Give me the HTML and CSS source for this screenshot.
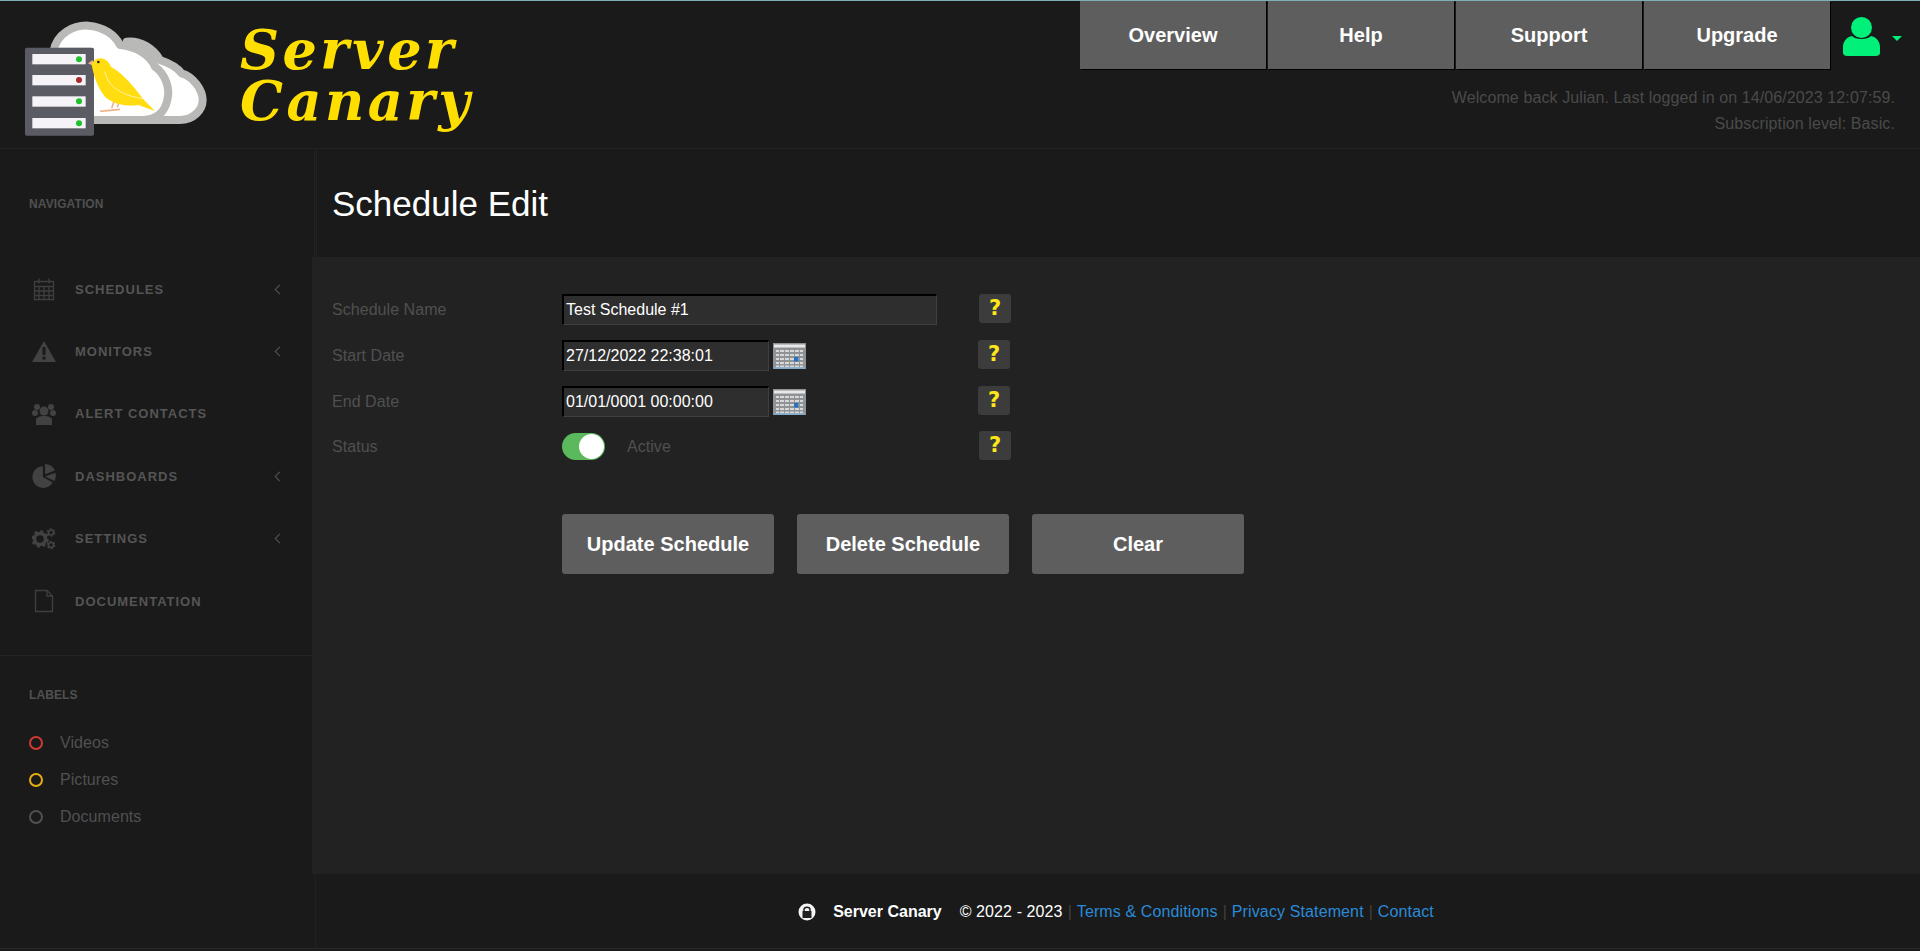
FILE: index.html
```html
<!DOCTYPE html>
<html lang="en">
<head>
<meta charset="utf-8">
<title>Server Canary - Schedule Edit</title>
<link rel="stylesheet" href="styles.css">
</head>
<body>
<div class="page">
  <header class="topbar">
    <a class="brand" href="#">
      <svg class="brand-mark" viewBox="0 0 630 390" aria-hidden="true">
        <path class="cloud" d="M350 95C390 90 430 115 450 150C480 160 500 170 515 190C550 200 578 240 578 270C578 300 550 330 510 330L400 330L350 200Z"/>
        <path class="cloud" d="M130 125C140 70 190 45 235 47C280 50 315 75 330 105C380 110 420 135 435 170C470 195 480 240 472 270C465 305 440 330 400 330L240 330L240 125Z"/>
        <rect class="rack" x="45" y="113" width="207" height="264" rx="5"/>
        <rect class="slot" x="67" y="132" width="160" height="31"/>
        <rect class="slot" x="67" y="195" width="160" height="31"/>
        <rect class="slot" x="67" y="259" width="160" height="31"/>
        <rect class="slot" x="67" y="324" width="160" height="31"/>
        <circle class="led-ok" cx="207" cy="148" r="9"/>
        <circle class="led-bad" cx="207" cy="210" r="9"/>
        <circle class="led-ok" cx="207" cy="274" r="9"/>
        <circle class="led-ok" cx="207" cy="340" r="9"/>
        <path class="bird-leg" d="M315 265L305 295M330 265L322 292M270 304L330 298"/>
        <path class="bird-beak" d="M248 150L234 160L250 168Z"/>
        <path class="bird" d="M245 165C248 145 285 130 303 170C340 190 380 240 400 268L435 303L385 285C360 290 310 285 285 260C260 230 250 190 245 165Z"/>
        <path class="bird-wing" d="M285 185C295 240 350 258 400 266"/>
        <circle class="bird-eye" cx="265" cy="156" r="4"/>
      </svg>
      <span class="wordmark"><span class="word-line">Server</span><span class="word-line">Canary</span></span>
    </a>
    <div class="top-right">
      <div class="top-row">
        <nav class="top-nav">
          <a class="top-link" href="#">Overview</a>
          <a class="top-link" href="#">Help</a>
          <a class="top-link" href="#">Support</a>
          <a class="top-link" href="#">Upgrade</a>
        </nav>
        <a class="user" href="#">
          <svg class="user-icon" viewBox="0 0 37 39" aria-hidden="true">
            <circle class="user-fill" cx="18.5" cy="10.5" r="10.5"/>
            <path class="user-fill" d="M9 19C12 23 25 23 28 19C33 20 37 24 37 30L37 36C37 38 35 39 33 39L4 39C2 39 0 38 0 36L0 30C0 24 4 20 9 19Z"/>
          </svg>
          <span class="user-caret"></span>
        </a>
      </div>
      <p class="welcome">Welcome back Julian. Last logged in on 14/06/2023 12:07:59.<br>Subscription level: Basic.</p>
    </div>
  </header>

  <div class="body">
    <aside class="sidebar">
      <h2 class="side-title side-title-nav">NAVIGATION</h2>
      <ul class="side-nav">
        <li class="side-item">
          <svg class="side-icon" viewBox="0 0 22 24" aria-hidden="true"><path class="i-line" d="M1.5 4.5h19v18h-19zM1.5 9.5h19M1.5 14h19M1.5 18.500h19M6 9.500v13M11 9.500v13M16 9.500v13"/><path class="i-line" d="M6 1.500v5M16 1.500v5"/></svg>
          <span class="side-text">SCHEDULES</span><span class="chev"></span>
        </li>
        <li class="side-item">
          <svg class="side-icon" viewBox="0 0 24 22" aria-hidden="true"><path class="i-fill" d="M12 0L24 21H0Z"/><rect class="i-cut" x="10.500" y="6" width="3" height="8"/><rect class="i-cut" x="10.500" y="15.500" width="3" height="3"/></svg>
          <span class="side-text">MONITORS</span><span class="chev"></span>
        </li>
        <li class="side-item">
          <svg class="side-icon" viewBox="0 0 24 22" aria-hidden="true"><circle class="i-fill" cx="5" cy="4" r="3"/><circle class="i-fill" cx="19" cy="4" r="3"/><circle class="i-fill" cx="3" cy="10" r="3"/><circle class="i-fill" cx="21" cy="10" r="3"/><circle class="i-fill" cx="12" cy="8" r="4.500"/><path class="i-fill" d="M4 22V17C4 14 8 13 12 13C16 13 20 14 20 17V22Z"/></svg>
          <span class="side-text">ALERT CONTACTS</span>
        </li>
        <li class="side-item">
          <svg class="side-icon" viewBox="0 0 22 22" aria-hidden="true"><path class="i-fill" d="M10 2A10 10 0 1 0 19 17L10 12Z"/><path class="i-fill" d="M12 0A10 10 0 0 1 21 6L12 9.500Z"/><path class="i-fill" d="M12 11.500L21.500 8A10 10 0 0 1 20.500 15.500Z"/></svg>
          <span class="side-text">DASHBOARDS</span><span class="chev"></span>
        </li>
        <li class="side-item">
          <svg class="side-icon" viewBox="0 0 24 22" aria-hidden="true"><circle class="i-gear-big" cx="8" cy="11" r="5.500"/><circle class="i-gear-tooth-big" cx="8" cy="11" r="7.500"/><circle class="i-gear-small" cx="19" cy="4.500" r="2.500"/><circle class="i-gear-tooth" cx="19" cy="4.500" r="3.500"/><circle class="i-gear-small" cx="19" cy="17" r="2.500"/><circle class="i-gear-tooth" cx="19" cy="17" r="3.500"/></svg>
          <span class="side-text">SETTINGS</span><span class="chev"></span>
        </li>
        <li class="side-item">
          <svg class="side-icon" viewBox="0 0 22 24" aria-hidden="true"><path class="i-line" d="M2.500 1.500H14L19.500 7V22.500H2.500ZM14 1.500V7H19.500"/></svg>
          <span class="side-text">DOCUMENTATION</span>
        </li>
      </ul>
      <div class="side-rule"></div>
      <h2 class="side-title side-title-labels">LABELS</h2>
      <ul class="labels">
        <li class="label-item"><span class="dot dot-red"></span>Videos</li>
        <li class="label-item"><span class="dot dot-amber"></span>Pictures</li>
        <li class="label-item"><span class="dot dot-grey"></span>Documents</li>
      </ul>
    </aside>

    <main class="main">
      <div class="title-band"><h1 class="title">Schedule Edit</h1></div>
      <section class="content">
        <form class="form">
          <label class="f-label">Schedule Name</label>
          <div class="f-field"><input class="input input-wide" type="text" value="Test Schedule #1"></div>
          <button class="help" type="button">?</button>

          <label class="f-label">Start Date</label>
          <div class="f-field"><input class="input input-date" type="text" value="27/12/2022 22:38:01">
            <svg class="cal" viewBox="0 0 33 26" aria-hidden="true"><rect class="cal-body" width="33" height="26"/><rect class="cal-head" x="1" y="1.500" width="31" height="3"/><path class="cal-grid" d="M3 8h27M3 12h27M3 16h27M3 20h27M3 23.500h27"/><path class="cal-bars" d="M6.500 6v18M11.500 6v18M16.500 6v18M21.500 6v18M26.500 6v18"/><rect class="cal-day" x="21" y="14" width="4.500" height="4.500"/><path class="cal-base" d="M1 25h31"/></svg>
          </div>
          <button class="help help-shift" type="button">?</button>

          <label class="f-label">End Date</label>
          <div class="f-field"><input class="input input-date" type="text" value="01/01/0001 00:00:00">
            <svg class="cal" viewBox="0 0 33 26" aria-hidden="true"><rect class="cal-body" width="33" height="26"/><rect class="cal-head" x="1" y="1.500" width="31" height="3"/><path class="cal-grid" d="M3 8h27M3 12h27M3 16h27M3 20h27M3 23.500h27"/><path class="cal-bars" d="M6.500 6v18M11.500 6v18M16.500 6v18M21.500 6v18M26.500 6v18"/><rect class="cal-day" x="21" y="14" width="4.500" height="4.500"/><path class="cal-base" d="M1 25h31"/></svg>
          </div>
          <button class="help help-shift" type="button">?</button>

          <label class="f-label f-label-last">Status</label>
          <div class="f-field f-field-last"><span class="toggle"><span class="knob"></span></span><span class="toggle-text">Active</span></div>
          <button class="help help-last" type="button">?</button>
        </form>
        <div class="actions">
          <button class="action" type="button">Update Schedule</button>
          <button class="action" type="button">Delete Schedule</button>
          <button class="action" type="button">Clear</button>
        </div>
      </section>
      <footer class="footer">
        <svg class="lock" viewBox="0 0 18 18" aria-hidden="true"><circle class="lock-bg" cx="9" cy="9" r="8.500"/><path class="lock-shackle" d="M6 8.500V6.500C6 3.500 12 3.500 12 6.500V8.500"/><rect class="lock-body" x="4.500" y="8" width="9" height="7"/></svg>
        <strong class="foot-name">Server Canary</strong>
        <span class="foot-copy">© 2022 - 2023</span>
        <span class="foot-sep">|</span><a class="foot-link" href="#">Terms &amp; Conditions</a>
        <span class="foot-sep">|</span><a class="foot-link" href="#">Privacy Statement</a>
        <span class="foot-sep">|</span><a class="foot-link" href="#">Contact</a>
      </footer>
    </main>
  </div>
</div>
</body>
</html>
```
FILE: styles.css
```css
* { box-sizing: border-box; }
html, body { margin: 0; height: 100%; }
body {
  background: #1a1a1a;
  color: #505050;
  font-family: "Liberation Sans", Arial, sans-serif;
  font-size: 16px;
  overflow: hidden;
}
a { text-decoration: none; color: inherit; }
ul { list-style: none; margin: 0; padding: 0; }
.page { height: 951px; display: flex; flex-direction: column; padding-bottom: 2px; }

/* header */
.topbar {
  height: 150px;
  flex: none;
  display: flex;
  justify-content: space-between;
  background: #1a1a1a;
  border-top: 1px solid #7fb0b5;
  border-bottom: 1px solid #1a1a1a;
  box-shadow: inset 0 -1px 0 #222;
}
.brand { display: flex; align-items: flex-start; padding-left: 10px; padding-top: 9px; }
.brand-mark { width: 210px; height: 130px; display: block; }
.cloud { fill: #fff; stroke: #b9b9b7; stroke-width: 24; stroke-linejoin: round; }
.rack { fill: #5b5b63; }
.slot { fill: #f5f3f8; }
.led-ok { fill: #1cc22c; }
.led-bad { fill: #a52c28; }
.bird { fill: #ffdd10; }
.bird-wing { fill: none; stroke: #fff2a0; stroke-width: 3; }
.bird-eye { fill: #223; }
.bird-beak { fill: #eeb48c; }
.bird-leg { fill: none; stroke: #eeb48c; stroke-width: 5; }
.wordmark {
  margin-left: 20px;
  margin-top: 15px;
  font-family: "DejaVu Serif", serif;
  font-style: italic;
  font-weight: 700;
  font-size: 54px;
  line-height: 51px;
  letter-spacing: 3.5px;
  color: #ffdf00;
}
.word-line { display: block; }
.top-right { display: flex; flex-direction: column; align-items: flex-end; }
.top-row { display: flex; align-items: flex-start; }
.top-nav { display: flex; gap: 2px; }
.top-link {
  width: 186px;
  height: 68px;
  display: flex;
  align-items: center;
  justify-content: center;
  background: #5e5e5e;
  color: #fff;
  font-weight: 700;
  font-size: 20px;
  box-shadow: 1px 1px 0 #000;
}
.user { width: 90px; display: flex; align-items: flex-start; padding: 16px 0 0 13px; }
.user-icon { width: 37px; height: 39px; display: block; }
.user-fill { fill: #00f07a; }
.user-caret {
  margin: 19px 0 0 12px;
  border-top: 5px solid #00f07a;
  border-left: 5px solid transparent;
  border-right: 5px solid transparent;
}
.welcome {
  margin: 16px 25px 0 0;
  text-align: right;
  line-height: 26px;
  letter-spacing: 0.1px;
  color: #4a4a4a;
}

/* body */
.body { flex: 1; display: grid; grid-template-columns: 312px 1fr; min-height: 0; border-bottom: 1px solid #2a2a2a; }

/* sidebar */
.sidebar { background: #1a1a1a; display: flex; flex-direction: column; }
.side-title { margin: 0; padding-left: 29px; font-size: 12px; line-height: 16px; font-weight: 700; letter-spacing: 0.1px; color: #505050; }
.side-title-nav { padding-top: 46px; height: 108px; }
.side-nav { flex: none; }
.side-item { height: 62.4px; display: flex; align-items: center; position: relative; padding-left: 32px; }
.side-icon { width: 24px; height: 24px; flex: none; }
.side-text {
  margin-left: 19px;
  font-size: 13px;
  font-weight: 700;
  letter-spacing: 1px;
  color: #555;
}
.chev {
  width: 7px;
  height: 7px;
  margin-left: auto;
  margin-right: 29px;
  border-left: 1px solid #555;
  border-bottom: 1px solid #555;
  transform: rotate(45deg);
}
.i-line { fill: none; stroke: #3f3f3f; stroke-width: 1.3; }
.i-fill { fill: #424242; }
.i-cut { fill: #1a1a1a; }
.i-gear-big { fill: none; stroke: #424242; stroke-width: 3.5; }
.i-gear-tooth-big { fill: none; stroke: #424242; stroke-width: 2.5; stroke-dasharray: 3 2.9; }
.i-gear-small { fill: none; stroke: #424242; stroke-width: 1.6; }
.i-gear-tooth { fill: none; stroke: #424242; stroke-width: 1.6; stroke-dasharray: 2 1.67; }
.side-rule { margin-top: 23px; border-top: 1px solid #232323; }
.side-title-labels { padding-top: 31px; }
.labels { margin-top: 21px; }
.label-item { height: 37px; display: flex; align-items: center; padding-left: 29px; letter-spacing: 0.05px; color: #505050; }
.dot { width: 14px; height: 14px; border-radius: 50%; border: 2px solid; margin-right: 17px; }
.dot-red { border-color: #cf3a34; }
.dot-amber { border-color: #e6ad12; }
.dot-grey { border-color: #505050; }

/* main */
.main { background: #1a1a1a; display: flex; flex-direction: column; min-width: 0; }
.title-band {
  height: 107px;
  flex: none;
  padding: 0 0 0 20px;
  display: flex;
  align-items: center;
  background: #1a1a1a linear-gradient(90deg, #1a1a1a 2px, #212121 2px, #212121 3px, #1a1a1a 3px, #1a1a1a 4px, #212121 4px, #212121 5px, #1a1a1a 5px);
}
.title { margin: 0; font-weight: 400; font-size: 35px; color: #fff; }
.content { flex: 1; padding: 37px 0 0 20px; background: #222; }
.form { display: grid; grid-template-columns: 230px 417px 32px; row-gap: 15px; align-items: start; }
.f-label { line-height: 31px; letter-spacing: 0.05px; color: #505050; }
.f-field { display: flex; align-items: center; height: 31px; }
.f-label-last, .f-field-last, .help-last { margin-top: -1px; }
.input {
  height: 31px;
  padding: 0 2px;
  background: #2e2e2e;
  color: #fff;
  font: 16px "Liberation Sans", Arial, sans-serif;
  border: 0;
  border-top: 2px solid #000;
  border-left: 2px solid #000;
  border-bottom: 1px solid #3f3f3f;
  border-right: 1px solid #3f3f3f;
  outline: 0;
}
.input-wide { width: 375px; }
.input-date { width: 207px; }
.cal { width: 33px; height: 26px; margin-left: 4px; }
.cal-body { fill: #8f9396; }
.cal-head { fill: #e8e8e8; }
.cal-grid { fill: none; stroke: #d8d8d8; stroke-width: 2; }
.cal-bars { fill: none; stroke: #8f9396; stroke-width: 1; }
.cal-day { fill: #2a72c0; }
.cal-base { stroke: #7fb0d8; stroke-width: 1.500; }
.help {
  width: 32px;
  height: 29px;
  padding: 0;
  border: 0;
  border-radius: 3px;
  background: #3c3c3c;
  color: #ffe61a;
  font: 700 21px/29px "DejaVu Sans", sans-serif;
}
.help-shift { margin-left: -1px; }
.toggle { width: 43px; height: 27px; border-radius: 14px; background: #5cb85c; display: flex; justify-content: flex-end; padding: 1px; }
.knob { width: 25px; height: 25px; border-radius: 50%; background: #fff; }
.toggle-text { margin-left: 22px; letter-spacing: 0.05px; color: #505050; }
.actions { display: flex; gap: 23px; margin: 52px 0 0 230px; }
.action {
  width: 212px;
  height: 60px;
  padding: 0;
  border: 0;
  border-radius: 3px;
  background: #5e5e5e;
  color: #fff;
  font: 700 20px "Liberation Sans", Arial, sans-serif;
}

/* footer */
.footer {
  height: 74px;
  flex: none;
  padding-top: 2px;
  background: #1a1a1a linear-gradient(90deg, #1a1a1a 3px, #212121 3px, #212121 4px, #1a1a1a 4px);
  display: flex;
  align-items: center;
  justify-content: center;
  white-space: pre;
}
.lock { width: 18px; height: 18px; margin-right: 17px; }
.lock-bg { fill: #f4f4f4; }
.lock-shackle { fill: none; stroke: #222; stroke-width: 1.500; }
.lock-body { fill: #222; }
.foot-name { color: #fff; margin-right: 18px; }
.foot-copy { color: #fff; letter-spacing: 0.1px; }
.foot-sep { color: #443f3a; margin: 0 5px; }
.foot-link { color: #2a8ad8; letter-spacing: 0.12px; }
```
